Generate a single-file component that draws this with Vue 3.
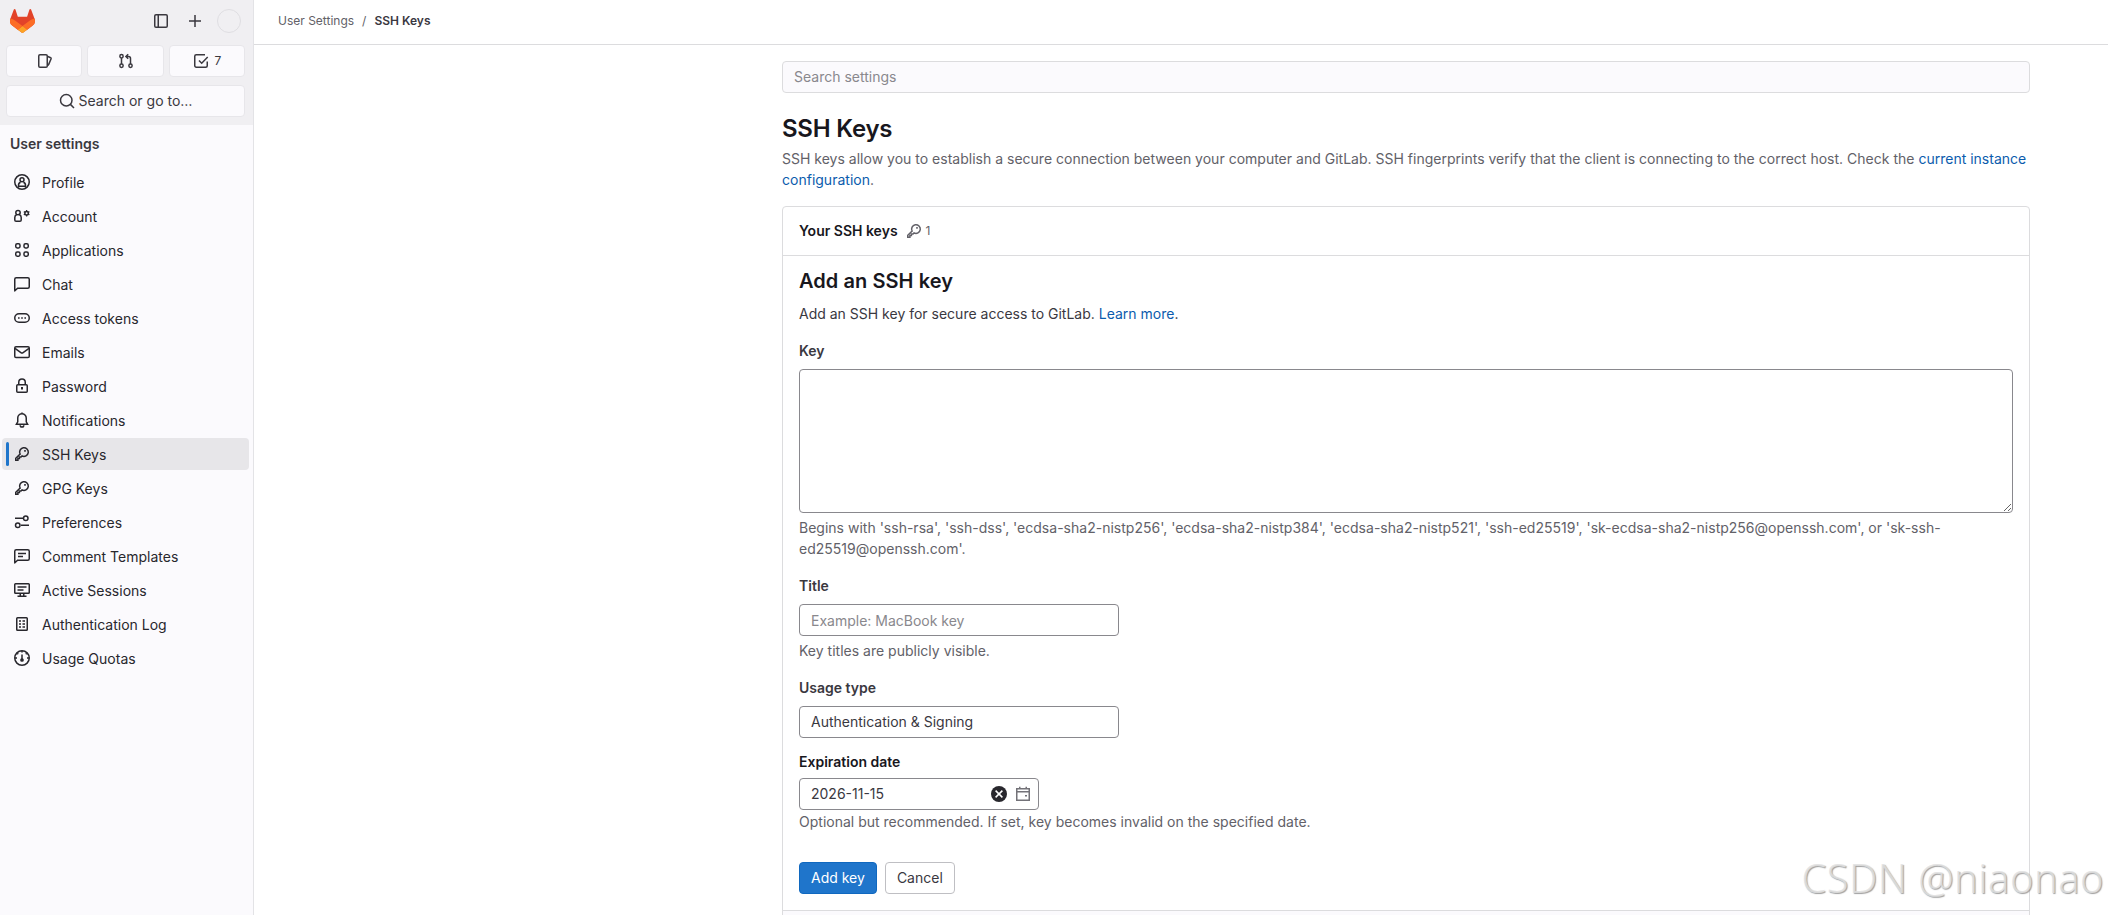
<template>
  <div class="layout">
    <aside class="sidebar">
      <div class="user-bar">
        <div class="brand-row">
          <svg class="logo" viewBox="0 0 25 24" width="25" height="24" aria-hidden="true">
            <path d="m24.507 9.5-.034-.09L21.082.562a.896.896 0 0 0-1.694.091l-2.29 7.01H7.825L5.535.653a.898.898 0 0 0-1.694-.09L.451 9.411.416 9.5a6.297 6.297 0 0 0 2.09 7.278l.012.01.03.022 5.16 3.867 2.56 1.935 1.554 1.176a1.051 1.051 0 0 0 1.268 0l1.555-1.176 2.56-1.935 5.197-3.89.014-.01A6.297 6.297 0 0 0 24.507 9.5Z" fill="#E24329" />
            <path d="m24.507 9.5-.034-.09a11.44 11.44 0 0 0-4.56 2.051l-7.447 5.632 4.742 3.584 5.197-3.89.014-.01A6.297 6.297 0 0 0 24.507 9.5Z" fill="#FC6D26" />
            <path d="m7.707 20.677 2.56 1.935 1.555 1.176a1.051 1.051 0 0 0 1.268 0l1.555-1.176 2.56-1.935-4.743-3.584-4.755 3.584Z" fill="#FCA326" />
            <path d="M5.01 11.461a11.43 11.43 0 0 0-4.56-2.05L.416 9.5a6.297 6.297 0 0 0 2.09 7.278l.012.01.03.022 5.16 3.867 4.745-3.584-7.444-5.632Z" fill="#FC6D26" />
          </svg>
          <button class="icon-btn" aria-label="Hide sidebar"><svg class="icon" viewBox="0 0 16 16" v-html="icons.sidebar" /></button>
          <button class="icon-btn create" aria-label="Create new"><svg class="icon" viewBox="0 0 16 16" v-html="icons.plus" /></button>
          <span class="avatar"></span>
        </div>
        <div class="counters">
          <a class="counter" aria-label="Issues"><svg class="icon" viewBox="0 0 16 16" v-html="icons.issues" /></a>
          <a class="counter" aria-label="Merge requests"><svg class="icon" viewBox="0 0 16 16" v-html="icons.merge" /></a>
          <a class="counter" aria-label="To-Do List"><svg class="icon" viewBox="0 0 16 16" v-html="icons.todo" /><span>{{ todos }}</span></a>
        </div>
        <button class="goto"><svg class="icon" viewBox="0 0 16 16" v-html="icons.search" />Search or go to…</button>
      </div>

      <div class="nav-title">User settings</div>
      <nav class="nav">
        <a
          v-for="item in items"
          :key="item.label"
          class="nav-item"
          :class="{ active: item.label === current }"
          @click="current = item.label"
        >
          <svg class="icon" viewBox="0 0 16 16" v-html="icons[item.icon]" />
          <span>{{ item.label }}</span>
        </a>
      </nav>
    </aside>

    <div class="page">
      <header class="top-bar">
        <span>User Settings</span>
        <span class="sep">/</span>
        <b>SSH Keys</b>
      </header>

      <main class="content">
        <input class="search-settings" type="text" placeholder="Search settings">
        <h1>SSH Keys</h1>
        <p class="intro">
          SSH keys allow you to establish a secure connection between your computer and GitLab. SSH fingerprints verify that the client is connecting to the correct host. Check the <a>current instance configuration</a>.
        </p>

        <section class="card">
          <div class="card-header">
            <h2>Your SSH keys</h2>
            <span class="count"><svg class="icon" viewBox="0 0 16 16" v-html="icons.key" />1</span>
          </div>

          <form class="card-body" @submit.prevent>
            <h3>Add an SSH key</h3>
            <p class="lead">Add an SSH key for secure access to GitLab. <a>Learn more</a>.</p>

            <label for="key">Key</label>
            <textarea id="key" v-model="form.key"></textarea>
            <p class="help">Begins with 'ssh-rsa', 'ssh-dss', 'ecdsa-sha2-nistp256', 'ecdsa-sha2-nistp384', 'ecdsa-sha2-nistp521', 'ssh-ed25519', 'sk-ecdsa-sha2-nistp256@openssh.com', or 'sk-ssh-ed25519@openssh.com'.</p>

            <label for="title">Title</label>
            <input id="title" v-model="form.title" class="field" type="text" placeholder="Example: MacBook key">
            <p class="help">Key titles are publicly visible.</p>

            <label for="usage">Usage type</label>
            <select id="usage" v-model="form.usage" class="field">
              <option>Authentication &amp; Signing</option>
              <option>Authentication</option>
              <option>Signing</option>
            </select>

            <label for="expires" class="expires-label">Expiration date</label>
            <div class="date-field">
              <input id="expires" v-model="form.expires" type="text">
              <button type="button" class="date-btn clear" aria-label="Clear date" @click="form.expires = ''">
                <svg class="icon" viewBox="0 0 16 16" v-html="icons.clear" />
              </button>
              <button type="button" class="date-btn" aria-label="Open calendar">
                <svg class="icon" viewBox="0 0 16 16" v-html="icons.calendar" />
              </button>
            </div>
            <p class="help date-help">Optional but recommended. If set, key becomes invalid on the specified date.</p>

            <div class="actions">
              <button type="submit" class="btn btn-confirm">Add key</button>
              <button type="button" class="btn">Cancel</button>
            </div>
          </form>
          <div class="card-list"></div>
        </section>
      </main>
    </div>

    <div class="watermark">CSDN @niaonao</div>
  </div>
</template>

<script setup>
import { ref, reactive } from 'vue';

const todos = ref(7);
const current = ref('SSH Keys');

const form = reactive({
  key: '',
  title: '',
  usage: 'Authentication & Signing',
  expires: '2026-11-15'
});

const items = [
  { label: 'Profile', icon: 'profile' },
  { label: 'Account', icon: 'account' },
  { label: 'Applications', icon: 'applications' },
  { label: 'Chat', icon: 'chat' },
  { label: 'Access tokens', icon: 'token' },
  { label: 'Emails', icon: 'mail' },
  { label: 'Password', icon: 'lock' },
  { label: 'Notifications', icon: 'bell' },
  { label: 'SSH Keys', icon: 'key' },
  { label: 'GPG Keys', icon: 'key' },
  { label: 'Preferences', icon: 'preferences' },
  { label: 'Comment Templates', icon: 'comment' },
  { label: 'Active Sessions', icon: 'monitor' },
  { label: 'Authentication Log', icon: 'log' },
  { label: 'Usage Quotas', icon: 'quota' }
];

// 16x16 outlines, stroked with currentColor
const icons = {
  sidebar: '<rect x="1.75" y="1.75" width="12.5" height="12.5" rx="1.25"/><path d="M5.25 2v12"/>',
  plus: '<path d="M8 2v12M2 8h12"/>',
  issues: '<rect x="1.75" y="1.75" width="8.5" height="12.5" rx="1.25"/><path d="M10.25 3.2l3.4 1.5a.8.8 0 0 1 .45 1L11.6 11.6a2 2 0 0 1-1.3 1.2"/>',
  merge: '<circle cx="3.5" cy="3.25" r="1.65"/><circle cx="3.5" cy="12.75" r="1.65"/><circle cx="12.5" cy="12.75" r="1.65"/><path d="M3.5 5v6M12.5 11V5.5a2 2 0 0 0-2-2H8.2M10.2 1.2L7.9 3.5l2.3 2.3"/>',
  todo: '<path d="M14.25 8.5v4.25a1.5 1.5 0 0 1-1.5 1.5h-9.5a1.5 1.5 0 0 1-1.5-1.5v-9.5a1.5 1.5 0 0 1 1.5-1.5H12M6 7.5l2.7 2.7 6-6.2"/>',
  search: '<circle cx="7.25" cy="7.25" r="5.75"/><path d="M11.4 11.4l3.6 3.6"/>',
  profile: '<circle cx="8" cy="8" r="7.25"/><circle cx="8" cy="5.7" r="2"/><path d="M4.5 13.6v-2.1A3.2 3.2 0 0 1 6.6 8.3M11.5 13.6v-2.1a3.2 3.2 0 0 0-2.1-3.2M5 12.25h6"/>',
  account: '<circle cx="4" cy="4.6" r="2.2"/><path d="M2.6 6.7A3 3 0 0 0 .8 9.6v2.3a1.3 1.3 0 0 0 1.3 1.3h3.8a1.3 1.3 0 0 0 1.3-1.3V9.6a3 3 0 0 0-1.8-2.9"/><circle cx="12.6" cy="5.2" r="1.75"/><path stroke-width="1.3" d="M12.6 2v1.4M12.6 7v1.4M9.8 3.6l1.2.7M14.2 6.1l1.2.7M9.8 6.8l1.2-.7M14.2 4.3l1.2-.7"/>',
  applications: '<rect x="1.75" y="1.75" width="4.25" height="4.25" rx="1.4"/><rect x="10" y="1.75" width="4.25" height="4.25" rx="1.4"/><rect x="1.75" y="10" width="4.25" height="4.25" rx="1.4"/><rect x="10" y="10" width="4.25" height="4.25" rx="1.4"/>',
  chat: '<path d="M.75 14.3V3.25a1.5 1.5 0 0 1 1.5-1.5h11.5a1.5 1.5 0 0 1 1.5 1.5v7.5a1.5 1.5 0 0 1-1.5 1.5H3.6L.9 14.7z"/>',
  token: '<rect x=".75" y="3.75" width="14.5" height="8.5" rx="4.25"/><path stroke-width="1.6" d="M4 8h1.6M7.2 8h1.6M10.4 8H12"/>',
  mail: '<rect x=".75" y="2.75" width="14.5" height="10.75" rx="1.25"/><path d="M1 4.3l5.9 4.3a1.9 1.9 0 0 0 2.2 0L15 4.3"/>',
  lock: '<rect x="2.75" y="6.75" width="10.5" height="7.5" rx="1"/><path d="M4.75 6.5V4.2a3.25 3.25 0 0 1 6.5 0v2.3"/><path stroke-width="2" d="M8 9v2.6"/>',
  bell: '<path d="M2.4 12.25h11.2l-1.35-2.4V6a4.25 4.25 0 0 0-8.5 0v3.85zM8 1.8V.6"/><path d="M6.2 13.2a1.8 1.8 0 0 0 3.6 0"/>',
  key: '<path d="M6.1 8.05a4.35 4.35 0 1 1 1.95 1.9L7 11H5.4v1.6H3.9v1.65H1.75v-2z"/><path stroke-width="1.7" d="M10.2 4.9h1.6"/>',
  preferences: '<path d="M1 4.25h8M7 11.25h8"/><circle cx="11.75" cy="4.25" r="2.25"/><circle cx="3.75" cy="11.25" r="2.25"/>',
  comment: '<path d="M.75 14.3V3.25a1.5 1.5 0 0 1 1.5-1.5h11.5a1.5 1.5 0 0 1 1.5 1.5v7.5a1.5 1.5 0 0 1-1.5 1.5H3.6L.9 14.7zM4 5.5h8M4 8.5h5"/>',
  monitor: '<rect x=".75" y="1.75" width="14.5" height="9.5" rx=".8"/><path d="M3.5 5h9M3.5 8h6M6.25 11.5v2.7M9.75 11.5v2.7M3.5 14.25h9"/>',
  log: '<rect x="2.75" y="1.75" width="10.5" height="12.5" rx=".8"/><path d="M5 5h2M8.5 5H11M5 8h2M8.5 8H11M5 11h2M8.5 11H11"/>',
  quota: '<circle cx="8" cy="8" r="7.25"/><path d="M8 1v1.5M8 4.6v5M1 8h2M13 8h2M3.3 3.3l.9.9M12.7 3.3l-.9.9"/><circle cx="8" cy="10" r="1.1" fill="currentColor"/>',
  clear: '<circle cx="8" cy="8" r="8" fill="currentColor" stroke="none"/><path stroke="#fff" d="M4.6 4.6l6.8 6.8M11.4 4.6l-6.8 6.8"/>',
  calendar: '<path d="M1.75 2.75h12.5v11.5H1.75zM2 5.75h12M4.75 .8v2M11.25 .8v2M10 9.75h2"/>'
};
</script>

<style>
body {
    margin: 0;
    overflow: hidden;
}
</style>

<style scoped>
.layout {
    display: flex;
    position: relative;
    width: 100%;
    height: 100vh;
    overflow: hidden;
    background: #fff;
    color: #3a383f;
    font-family: Inter, "Liberation Sans", sans-serif;
    font-size: 14px;
    line-height: 20px;
}

button, input, textarea, select {
    font: inherit;
    color: inherit;
    box-sizing: border-box;
}

a {
    color: #0b5cad;
    cursor: pointer;
}

.icon {
    width: 16px;
    height: 16px;
    flex-shrink: 0;
    fill: none;
    stroke: currentColor;
    stroke-width: 1.5;
}

/* Sidebar */
.sidebar {
    width: 254px;
    flex-shrink: 0;
    box-sizing: border-box;
    border-right: 1px solid #e3e3e6;
    background: #fbfafd;
}

.user-bar {
    height: 125px;
    box-sizing: border-box;
    padding: 9px 8px 0 6px;
    background: #f0eff2;
}

.brand-row {
    display: flex;
    align-items: center;
    height: 24px;
    padding-left: 4px;
}

.logo { margin-right: auto; }

.icon-btn {
    display: flex;
    padding: 0;
    border: none;
    background: none;
    margin-right: 18px;
}

.icon-btn.create { margin-right: 14px; }

.avatar {
    width: 24px;
    height: 24px;
    box-sizing: border-box;
    border: 1px solid #dfdee2;
    border-radius: 50%;
    margin-right: 4px;
}

.counters {
    display: flex;
    gap: 5px;
    margin-top: 12px;
}

.counter, .goto {
    display: flex;
    align-items: center;
    justify-content: center;
    height: 32px;
    box-sizing: border-box;
    border: 1px solid #e7e6ea;
    border-radius: 4px;
    background: #fbfafd;
    color: #3a383f;
}

.counter {
    flex: 1;
    gap: 5px;
    padding-left: 1px;
    font-size: 12px;
}

.goto {
    width: 100%;
    gap: 4px;
    margin-top: 8px;
    padding: 0;
}

.nav-title {
    padding: 9px 10px 0;
    font-weight: 600;
}

.nav {
    display: flex;
    flex-direction: column;
    gap: 2px;
    padding: 12px 4px 0 2px;
}

.nav-item {
    position: relative;
    display: flex;
    align-items: center;
    gap: 12px;
    height: 32px;
    padding-left: 12px;
    border-radius: 4px;
    color: #28272d;
}

.nav-item span { padding-top: 2px; }

.nav-item.active { background: #e7e6e9; }

.nav-item.active::before {
    content: '';
    position: absolute;
    left: 4px;
    top: 4px;
    width: 3px;
    height: 24px;
    border-radius: 2px;
    background: #1f75cb;
}

/* Page */
.page {
    flex: 1;
    min-width: 0;
}

.top-bar {
    display: flex;
    align-items: center;
    height: 45px;
    box-sizing: border-box;
    padding: 0 24px 3px;
    border-bottom: 1px solid #dcdcde;
    font-size: 12px;
    color: #626168;
}

.sep { margin: 0 8px; }

.top-bar b {
    font-weight: 600;
    color: #3a383f;
}

.content {
    width: 1248px;
    margin: 16px 0 0 528px;
}

.search-settings {
    display: block;
    width: 100%;
    height: 32px;
    padding: 0 11px 1px;
    border: 1px solid #dcdcde;
    border-radius: 4px;
    background: #fbfafd;
}

input::placeholder {
    color: #89888d;
    opacity: 1;
}

h1 {
    margin: 21px 0 0;
    font-size: 24px;
    line-height: 30px;
    font-weight: 600;
    letter-spacing: -0.24px;
    color: #18171d;
}

.intro {
    margin: 4px 0 0;
    line-height: 21px;
    letter-spacing: 0.008px;
    color: #626168;
}

.card {
    margin-top: 16px;
    border: 1px solid #dcdcde;
    border-radius: 4px;
}

.card-header {
    display: flex;
    align-items: center;
    gap: 8px;
    height: 48px;
    padding: 0 16px;
    border-bottom: 1px solid #dcdcde;
}

h2 {
    margin: 0;
    font-size: 14px;
    font-weight: 600;
    color: #18171d;
}

.count {
    display: flex;
    align-items: center;
    gap: 4px;
    font-size: 12px;
    color: #626168;
}

.card-body {
    height: 638px;
    padding: 16px 16px 0;
}

h3 {
    margin: 0;
    font-size: 20px;
    line-height: 18px;
    font-weight: 600;
    letter-spacing: 0.06px;
    color: #18171d;
}

.lead {
    margin: 14px 0 17px;
    color: #3a383f;
}

label {
    display: block;
    margin-bottom: 8px;
    font-weight: 600;
}

textarea, .field, .date-field {
    display: block;
    border: 1px solid #89888d;
    border-radius: 4px;
    background: #fff;
}

textarea {
    width: 100%;
    height: 144px;
    padding: 8px 12px;
    resize: vertical;
}

.help {
    margin: 4px 0 17px;
    line-height: 21px;
    letter-spacing: 0.008px;
    color: #626168;
}

.field {
    width: 320px;
    height: 32px;
    padding: 0 11px;
}

select.field { appearance: none; }

.expires-label {
    margin: 14px 0 6px;
    color: #18171d;
}

.date-field {
    display: flex;
    align-items: center;
    width: 240px;
    height: 32px;
    box-sizing: border-box;
    padding: 0 7px 0 11px;
}

.date-field input {
    flex: 1;
    min-width: 0;
    padding: 0;
    border: none;
    outline: none;
    background: none;
}

.date-btn {
    display: flex;
    padding: 0;
    border: none;
    background: none;
    color: #737278;
}

.date-btn.clear {
    margin-right: 8px;
    color: #28272d;
}

.date-help { margin: 1px 0 0; }

.actions {
    display: flex;
    gap: 8px;
    margin-top: 30px;
}

.btn {
    height: 32px;
    padding: 0 11px;
    border: 1px solid #bfbfc3;
    border-radius: 4px;
    background: #fff;
}

.btn-confirm {
    border-color: #1068bf;
    background: #1f75cb;
    color: #fff;
}

.card-list {
    height: 60px;
    border-top: 1px solid #dcdcde;
    background: #fbfafd;
}

.watermark {
    position: absolute;
    right: 4px;
    bottom: 10px;
    font-family: "Noto Sans", "Open Sans", sans-serif;
    font-size: 40px;
    font-weight: 300;
    line-height: 54px;
    letter-spacing: 0.4px;
    color: rgba(225, 225, 225, 0.85);
    text-shadow: 1px 1px 1px rgba(120, 120, 120, 0.7);
    pointer-events: none;
}
</style>
